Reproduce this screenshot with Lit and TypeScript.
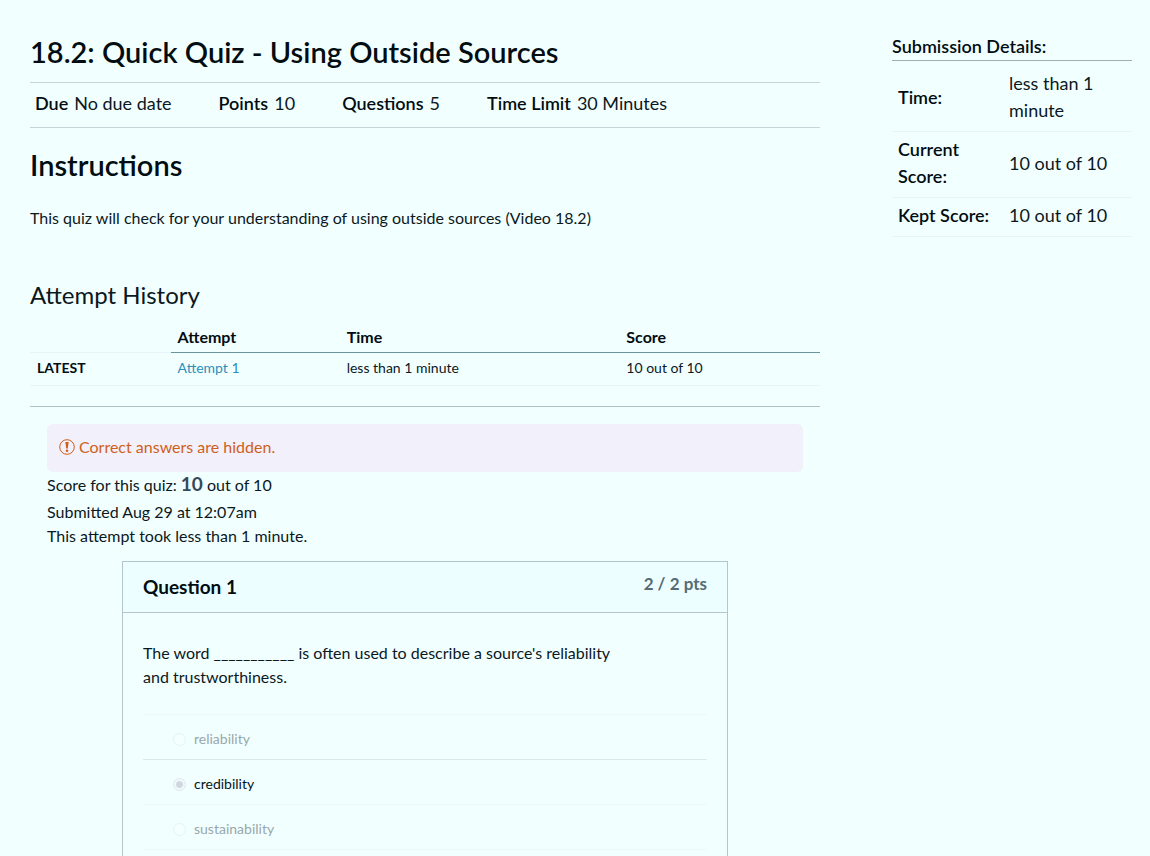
import { LitElement, html, css } from "lit";
import { customElement, property } from "lit/decorators.js";
import { classMap } from "lit/directives/class-map.js";

interface Answer {
  id: string;
  text: string;
}

const DETAILS = [
  { label: "Due", value: "No due date" },
  { label: "Points", value: "10" },
  { label: "Questions", value: "5" },
  { label: "Time Limit", value: "30 Minutes" },
];

const SUBMISSION = [
  { label: "Time:", value: "less than 1 minute" },
  { label: "Current Score:", value: "10 out of 10" },
  { label: "Kept Score:", value: "10 out of 10" },
];

const ANSWERS: Answer[] = [
  { id: "a1", text: "reliability" },
  { id: "a2", text: "credibility" },
  { id: "a3", text: "sustainability" },
];

@customElement("quiz-question")
export class QuizQuestion extends LitElement {
  @property() heading = "";
  @property() points = "";
  @property() prompt = "";
  @property() selected = "";
  @property({ attribute: false }) answers: Answer[] = [];

  static styles = css`
    :host {
      display: flex;
      flex-direction: column;
      box-sizing: border-box;
      border: 1px solid #b3c6c9;
      border-bottom: 0;
    }
    .head {
      display: flex;
      justify-content: space-between;
      align-items: flex-start;
      padding: 10px 20px;
      background: #ecfeff;
      border-bottom: 1px solid #b3c6c9;
    }
    .name {
      margin: 0;
      font-size: 19px;
      line-height: 30px;
      font-weight: 700;
      color: #020d12;
    }
    .points {
      font-size: 17px;
      line-height: 24px;
      font-weight: 700;
      color: #566b72;
    }
    .body {
      padding: 28px 20px 0;
    }
    .prompt {
      max-width: 490px;
      margin: 0 0 25px;
      font-size: 16px;
      line-height: 24px;
    }
    .answers {
      margin: 0;
      padding: 0;
      border: 0;
    }
    .answer {
      display: flex;
      align-items: center;
      gap: 8px;
      min-height: 45px;
      padding: 4px 0 0 30px;
      box-sizing: border-box;
      border-top: 1px solid #ebf9f9;
      font-size: 14px;
      line-height: 20px;
      color: #98a7ab;
    }
    .answer.chosen {
      border-top-color: #d9eaec;
      color: #06141a;
    }
    .answer:last-child {
      border-bottom: 1px solid #ebf9f9;
      min-height: 46px;
    }
    .radio {
      appearance: none;
      flex: none;
      width: 13px;
      height: 13px;
      margin: 0;
      border: 1px solid #e6f3f5;
      border-radius: 50%;
      background: #f4ffff;
    }
    .radio:checked {
      border-color: #dce8ec;
      background: radial-gradient(circle, #cfd8de 0 3px, #f0fafc 4px);
    }
  `;

  render() {
    return html`
      <header class="head">
        <h2 class="name">${this.heading}</h2>
        <span class="points">${this.points}</span>
      </header>
      <div class="body">
        <p class="prompt" id="prompt">${this.prompt}</p>
        <fieldset class="answers" aria-labelledby="prompt">
          ${this.answers.map(
            (a) => html`
              <label class=${classMap({ answer: true, chosen: a.id === this.selected })} for=${a.id}>
                <input class="radio" type="radio" name="answer" id=${a.id} ?checked=${a.id === this.selected} disabled />
                <span>${a.text}</span>
              </label>
            `
          )}
        </fieldset>
      </div>
    `;
  }
}

@customElement("app-root")
export class AppRoot extends LitElement {
  static styles = css`
    :host {
      display: flex;
      align-items: stretch;
      gap: 72px;
      box-sizing: border-box;
      min-height: 100vh;
      padding: 32px 18px 0 30px;
      background: #f2ffff;
      color: #0b181d;
      font-family: Lato, "Liberation Sans", sans-serif;
      font-size: 16px;
      line-height: 24px;
    }
    .main {
      flex: 1;
      min-width: 0;
      display: flex;
      flex-direction: column;
    }
    .title {
      margin: 0;
      font-size: 29px;
      line-height: 40px;
      font-weight: 600;
      color: #020d12;
    }
    .details {
      display: flex;
      flex-wrap: wrap;
      column-gap: 47px;
      margin: 10px 0 17px;
      padding: 7px 5px 10px;
      border-top: 1px solid #c4d6d9;
      border-bottom: 1px solid #c4d6d9;
      font-size: 18px;
      line-height: 27px;
    }
    .detail {
      display: flex;
      gap: 6px;
    }
    .term {
      font-weight: 600;
      color: #020d12;
    }
    .value {
      margin: 0;
    }
    .intro {
      margin: 21px 0 47px;
    }
    .subtitle {
      margin: 0 0 9px;
      font-size: 24px;
      line-height: 36px;
      font-weight: 400;
    }
    .history {
      width: 100%;
      table-layout: fixed;
      border-collapse: collapse;
      text-align: left;
    }
    .history th,
    .history td {
      padding: 3px 7px 5px;
      border-bottom: 1px solid #e6f5f7;
      font-size: 14px;
    }
    .history .col {
      padding: 3px 7px;
      border-bottom-color: #6b949d;
      font-size: 16px;
      font-weight: 700;
    }
    .history .blank {
      padding: 0;
    }
    .history th {
      font-weight: 700;
      color: #020d12;
    }
    .c-version { width: 17.8%; }
    .c-attempt { width: 21.4%; }
    .c-time { width: 35.4%; }
    .link {
      color: #2b8fba;
      text-decoration: none;
    }
    .results {
      flex: 1;
      display: flex;
      flex-direction: column;
      margin-top: 20px;
      padding: 17px 17px 0;
      border-top: 1px solid #afc2c5;
    }
    .alert {
      display: flex;
      align-items: center;
      gap: 4px;
      padding: 11px 12px 13px;
      border-radius: 6px;
      background: #f2f0fa;
      color: #cf5f1c;
    }
    .alert-icon {
      flex: none;
      width: 16px;
      height: 16px;
    }
    .line {
      margin: 0;
    }
    .score {
      margin-bottom: 3px;
    }
    .score-value {
      font-size: 19px;
      font-weight: 700;
      color: #34495a;
    }
    .question {
      flex: 1;
      margin: 13px 75px 0;
    }
    .side {
      width: 240px;
      flex: none;
      padding-top: 2px;
    }
    .side-title {
      margin: 0;
      padding-bottom: 2px;
      border-bottom: 1px solid #9db0b4;
      font-size: 18px;
      line-height: 24px;
      font-weight: 600;
      color: #020d12;
    }
    .submission {
      width: 100%;
      margin-top: 5px;
      border-collapse: collapse;
      font-size: 18px;
      line-height: 27px;
      text-align: left;
    }
    .submission th,
    .submission td {
      padding: 4px 6px 7px;
      border-bottom: 1px solid #e6f5f7;
    }
    .submission th {
      width: 99px;
      font-weight: 600;
      color: #020d12;
    }
  `;

  render() {
    return html`
      <main class="main">
        <h1 class="title">18.2: Quick Quiz - Using Outside Sources</h1>
        <dl class="details">
          ${DETAILS.map(
            (d) => html`<div class="detail"><dt class="term">${d.label}</dt><dd class="value">${d.value}</dd></div>`
          )}
        </dl>
        <h2 class="title">Instructions</h2>
        <p class="intro">This quiz will check for your understanding of using outside sources (Video 18.2)</p>
        <h2 class="subtitle">Attempt History</h2>
        <table class="history">
          <colgroup>
            <col class="c-version" />
            <col class="c-attempt" />
            <col class="c-time" />
            <col />
          </colgroup>
          <thead>
            <tr>
              <td class="blank"></td>
              <th class="col" scope="col">Attempt</th>
              <th class="col" scope="col">Time</th>
              <th class="col" scope="col">Score</th>
            </tr>
          </thead>
          <tbody>
            <tr>
              <th scope="row">LATEST</th>
              <td><a class="link" href="#attempt-1">Attempt 1</a></td>
              <td>less than 1 minute</td>
              <td>10 out of 10</td>
            </tr>
          </tbody>
        </table>
        <section class="results" id="attempt-1">
          <div class="alert" role="status">
            <svg class="alert-icon" viewBox="0 0 16 16" aria-hidden="true">
              <circle cx="8" cy="8" r="7.3" fill="none" stroke="currentColor" stroke-width="1" />
              <path d="M6.4 3h3.2L8.8 9.4H7.2z" fill="currentColor" />
              <circle cx="8" cy="11.8" r="1.3" fill="currentColor" />
            </svg>
            <span>Correct answers are hidden.</span>
          </div>
          <p class="line score">Score for this quiz: <strong class="score-value">10</strong> out of 10</p>
          <p class="line">Submitted Aug 29 at 12:07am</p>
          <p class="line">This attempt took less than 1 minute.</p>
          <quiz-question
            class="question"
            heading="Question 1"
            points="2 / 2 pts"
            prompt="The word ___________ is often used to describe a source's reliability and trustworthiness."
            selected="a2"
            .answers=${ANSWERS}
          ></quiz-question>
        </section>
      </main>
      <aside class="side">
        <h2 class="side-title">Submission Details:</h2>
        <table class="submission">
          <tbody>
            ${SUBMISSION.map((s) => html`<tr><th scope="row">${s.label}</th><td>${s.value}</td></tr>`)}
          </tbody>
        </table>
      </aside>
    `;
  }
}
